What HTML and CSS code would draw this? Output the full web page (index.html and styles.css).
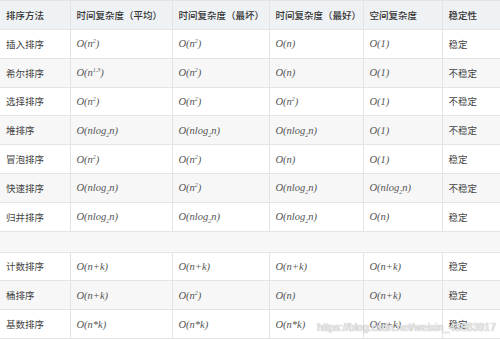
FILE: index.html
```html
<!DOCTYPE html>
<html lang="zh-CN">
<head>
    <meta charset="UTF-8">
    <title>排序算法复杂度</title>
    <link rel="stylesheet" href="styles.css">
</head>
<body>
    <div class="wrap">
        <table class="sort-table">
            <colgroup>
                <col class="c1"><col class="c2"><col class="c3"><col class="c4"><col class="c5"><col class="c6">
            </colgroup>
            <thead>
                <tr>
                    <th>排序方法</th>
                    <th>时间复杂度（平均）</th>
                    <th>时间复杂度（最坏）</th>
                    <th>时间复杂度（最好）</th>
                    <th>空间复杂度</th>
                    <th>稳定性</th>
                </tr>
            </thead>
            <tbody>
                <tr>
                    <td>插入排序</td>
                    <td class="f">O(n<sup>2</sup>)</td>
                    <td class="f">O(n<sup>2</sup>)</td>
                    <td class="f">O(n)</td>
                    <td class="f">O(1)</td>
                    <td>稳定</td>
                </tr>
                <tr>
                    <td>希尔排序</td>
                    <td class="f">O(n<sup>1.3</sup>)</td>
                    <td class="f">O(n<sup>2</sup>)</td>
                    <td class="f">O(n)</td>
                    <td class="f">O(1)</td>
                    <td>不稳定</td>
                </tr>
                <tr>
                    <td>选择排序</td>
                    <td class="f">O(n<sup>2</sup>)</td>
                    <td class="f">O(n<sup>2</sup>)</td>
                    <td class="f">O(n<sup>2</sup>)</td>
                    <td class="f">O(1)</td>
                    <td>不稳定</td>
                </tr>
                <tr>
                    <td>堆排序</td>
                    <td class="f">O(nlog<sub>2</sub>n)</td>
                    <td class="f">O(nlog<sub>2</sub>n)</td>
                    <td class="f">O(nlog<sub>2</sub>n)</td>
                    <td class="f">O(1)</td>
                    <td>不稳定</td>
                </tr>
                <tr>
                    <td>冒泡排序</td>
                    <td class="f">O(n<sup>2</sup>)</td>
                    <td class="f">O(n<sup>2</sup>)</td>
                    <td class="f">O(n)</td>
                    <td class="f">O(1)</td>
                    <td>稳定</td>
                </tr>
                <tr>
                    <td>快速排序</td>
                    <td class="f">O(nlog<sub>2</sub>n)</td>
                    <td class="f">O(n<sup>2</sup>)</td>
                    <td class="f">O(nlog<sub>2</sub>n)</td>
                    <td class="f">O(nlog<sub>2</sub>n)</td>
                    <td>不稳定</td>
                </tr>
                <tr>
                    <td>归并排序</td>
                    <td class="f">O(nlog<sub>2</sub>n)</td>
                    <td class="f">O(nlog<sub>2</sub>n)</td>
                    <td class="f">O(nlog<sub>2</sub>n)</td>
                    <td class="f">O(n)</td>
                    <td>稳定</td>
                </tr>
                <tr class="gap">
                    <td colspan="6"></td>
                </tr>
                <tr>
                    <td>计数排序</td>
                    <td class="f">O(n+k)</td>
                    <td class="f">O(n+k)</td>
                    <td class="f">O(n+k)</td>
                    <td class="f">O(n+k)</td>
                    <td>稳定</td>
                </tr>
                <tr>
                    <td>桶排序</td>
                    <td class="f">O(n+k)</td>
                    <td class="f">O(n<sup>2</sup>)</td>
                    <td class="f">O(n)</td>
                    <td class="f">O(n+k)</td>
                    <td>稳定</td>
                </tr>
                <tr>
                    <td>基数排序</td>
                    <td class="f">O(n*k)</td>
                    <td class="f">O(n*k)</td>
                    <td class="f">O(n*k)</td>
                    <td class="f">O(n+k)</td>
                    <td>稳定</td>
                </tr>
            </tbody>
        </table>
        <!-- watermark -->
        <span class="mark">https://blog.csdn.net/weixin_43883917</span>
    </div>
</body>
</html>
```

FILE: styles.css
```css
body {
    margin: 0;
    background: #fff;
    font-family: "Noto Sans CJK SC", "Noto Sans", sans-serif;
    color: #444;
}

.wrap {
    position: relative;
    width: 500px;
}

.sort-table {
    width: 500px;
    border-collapse: collapse;
    table-layout: fixed;
}

.c1 { width: 70px; }
.c2 { width: 102px; }
.c3 { width: 97px; }
.c4 { width: 94px; }
.c5 { width: 79px; }
.c6 { width: 58px; }

th, td {
    height: 28.8px;
    padding: 0 0 0 6px;
    border: 1px solid #e4e4e4;
    text-align: left;
    font-size: 9.5px;
    white-space: nowrap;
    box-sizing: border-box;
}

th, td:first-child {
    border-left: none;
}

th {
    height: 29px;
    background: #eff2f5;
    color: #333;
    font-weight: 500;
}

tbody tr:nth-child(even) {
    background: #f7f7f7;
}

.gap td {
    height: 21px;
}

td.f {
    font-family: "Liberation Serif", serif;
    font-style: italic;
    font-size: 10.5px;
    color: #555;
}

sup, sub {
    font-size: 6px;
    line-height: 0;
}

.mark {
    position: absolute;
    right: 4px;
    bottom: 6px;
    font-family: "Liberation Sans", sans-serif;
    font-size: 10.5px;
    color: rgba(255, 255, 255, 0.85);
    text-shadow: 0 0 1px #999, 0 0 1px #bbb;
}
```
